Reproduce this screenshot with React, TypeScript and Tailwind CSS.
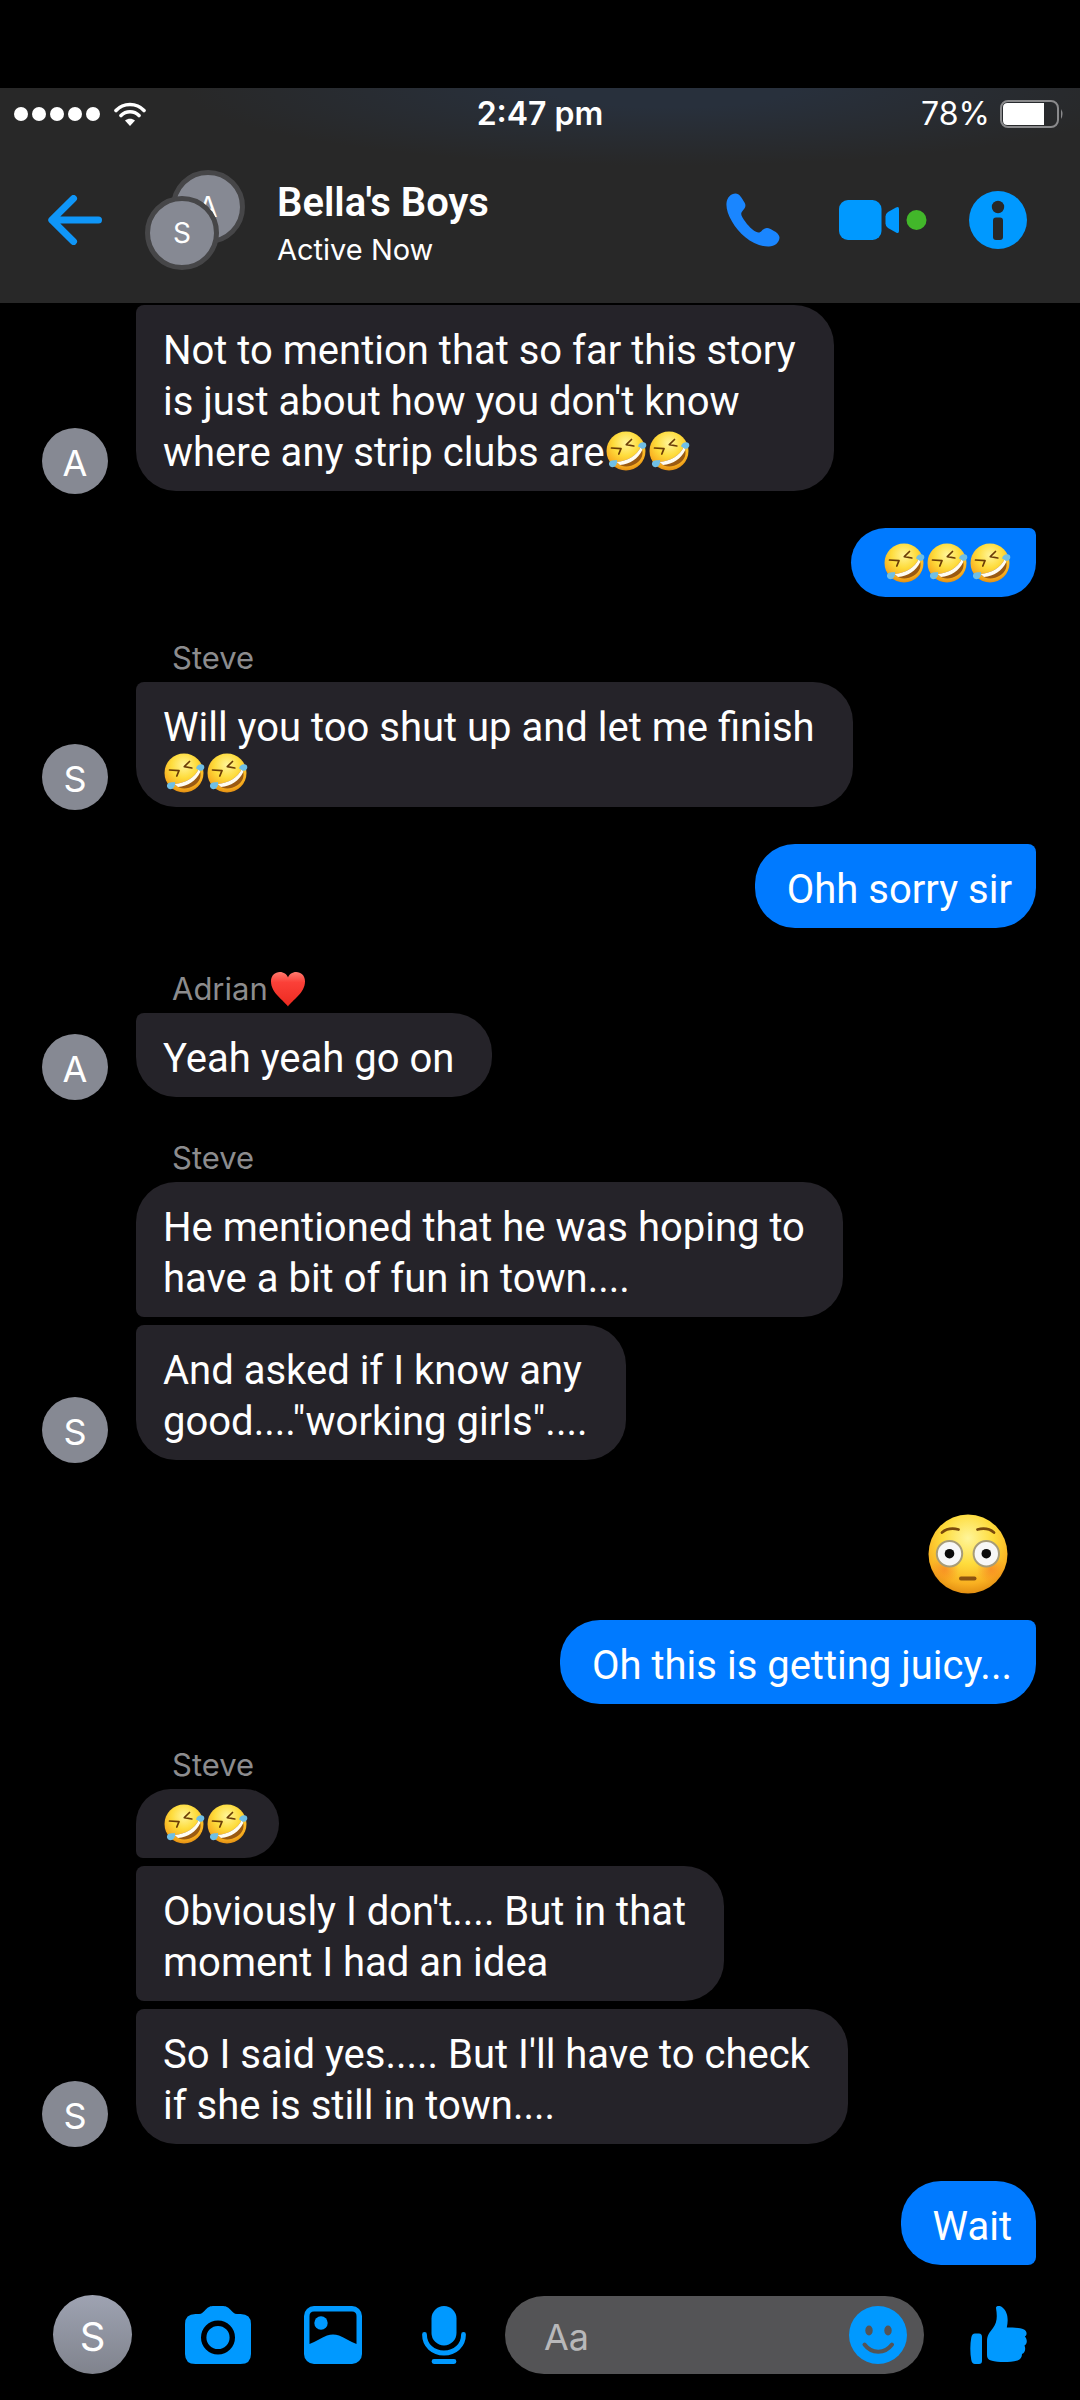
import {ReactNode} from 'react'
import clsx from 'clsx'

type Part = 'rofl' | string

interface Message {
  lines: Part[][]
  corner: string
}

interface Group {
  from: 'me' | 'Steve' | 'Adrian'
  hideName?: boolean
  flushed?: boolean
  messages: Message[]
}

const SQUARE_TL = 'rounded-tl-lg'
const SQUARE_BL = 'rounded-bl-lg'
const SQUARE_LEFT = 'rounded-l-lg'
const SQUARE_TR = 'rounded-tr-lg'
const SQUARE_BR = 'rounded-br-lg'

const conversation: Group[] = [
  {
    from: 'Adrian',
    hideName: true,
    messages: [
      {
        lines: [
          ['Not to mention that so far this story'],
          ["is just about how you don't know"],
          ['where any strip clubs are', 'rofl', 'rofl'],
        ],
        corner: SQUARE_TL,
      },
    ],
  },
  {
    from: 'me',
    messages: [{lines: [['rofl', 'rofl', 'rofl']], corner: SQUARE_TR}],
  },
  {
    from: 'Steve',
    messages: [
      {
        lines: [
          ['Will you too shut up and let me finish'],
          ['rofl', 'rofl'],
        ],
        corner: SQUARE_TL,
      },
    ],
  },
  {from: 'me', messages: [{lines: [['Ohh sorry sir']], corner: SQUARE_TR}]},
  {
    from: 'Adrian',
    messages: [{lines: [['Yeah yeah go on']], corner: SQUARE_TL}],
  },
  {
    from: 'Steve',
    messages: [
      {
        lines: [
          ['He mentioned that he was hoping to'],
          ['have a bit of fun in town....'],
        ],
        corner: SQUARE_BL,
      },
      {
        lines: [['And asked if I know any'], ['good...."working girls"....']],
        corner: SQUARE_TL,
      },
    ],
  },
  {
    from: 'me',
    flushed: true,
    messages: [
      {lines: [['Oh this is getting juicy...']], corner: SQUARE_TR},
    ],
  },
  {
    from: 'Steve',
    messages: [
      {lines: [['rofl', 'rofl']], corner: SQUARE_BL},
      {
        lines: [["Obviously I don't.... But in that"], ['moment I had an idea']],
        corner: SQUARE_LEFT,
      },
      {
        lines: [
          ["So I said yes..... But I'll have to check"],
          ['if she is still in town....'],
        ],
        corner: SQUARE_TL,
      },
    ],
  },
  {from: 'me', messages: [{lines: [['Wait']], corner: SQUARE_BR}]},
]

const EmojiDefs = () => (
  <svg className="absolute size-0" aria-hidden="true">
    <defs>
      <radialGradient id="face" cx="0.5" cy="0.3" r="0.72">
        <stop offset="0" stopColor="#fff59a" />
        <stop offset="0.45" stopColor="#fedc3c" />
        <stop offset="0.8" stopColor="#f9b021" />
        <stop offset="1" stopColor="#e08a10" />
      </radialGradient>
      <radialGradient id="cheek">
        <stop offset="0" stopColor="#f4511e" stopOpacity="0.4" />
        <stop offset="1" stopColor="#f4511e" stopOpacity="0" />
      </radialGradient>
      <linearGradient id="heart" x1="0" y1="0" x2="0" y2="1">
        <stop offset="0" stopColor="#ff7a6e" />
        <stop offset="0.3" stopColor="#fb4038" />
        <stop offset="1" stopColor="#ec2a20" />
      </linearGradient>
    </defs>
  </svg>
)

const Rofl = () => (
  <svg
    role="img"
    aria-label="🤣"
    viewBox="-1 0 43 40"
    className="inline-block h-10 w-[43px] shrink-0 align-[-5px]"
  >
    <circle cx="20" cy="20" r="19.5" fill="url(#face)" />
    <path
      d="M10.5 31C21 30 31 25 35 15.5C38.5 22 36 29 30 32.5C23 37 15 36.5 10.5 31Z"
      fill="#9a5a12"
    />
    <path
      d="M10.5 31C21 30 31 25 35 15.5L36.3 19C32 28 24 33 14 34Z"
      fill="#fffdf4"
    />
    <path
      d="M25.5 8.5L20.3 13.6L27.8 15M5.5 17L15 17.6L12.8 23"
      fill="none"
      stroke="#6b3c06"
      strokeWidth="1.7"
      strokeLinecap="round"
      strokeLinejoin="round"
    />
    <path
      d="M32 15.5C33 11.5 37 10.5 39.5 12C41.5 14.5 39.5 18 36.5 17.8C35 17.5 33.5 16 32 15.5Z"
      fill="#6fbfe6"
    />
    <path
      d="M11 29C11.5 33 9.5 36.5 6 36.2C2.5 35.5 2 31.5 4.5 30C6.5 28.8 9 29.6 11 29Z"
      fill="#6fbfe6"
    />
  </svg>
)

const Flushed = () => (
  <svg
    role="img"
    aria-label="😳"
    viewBox="0 0 80 80"
    className="mr-7 mb-[18px] size-20"
  >
    <circle cx="40" cy="40" r="39.5" fill="url(#face)" />
    <circle cx="17" cy="55" r="14" fill="url(#cheek)" />
    <circle cx="63" cy="55" r="14" fill="url(#cheek)" />
    <g fill="#f7f7f7" stroke="#a79c78" strokeWidth="2">
      <circle cx="21.5" cy="39.7" r="12.7" />
      <circle cx="58.3" cy="39.7" r="12.7" />
    </g>
    <circle cx="21.5" cy="39.7" r="4.8" fill="#0b0b0b" />
    <circle cx="58.3" cy="39.7" r="4.8" fill="#0b0b0b" />
    <path
      d="M14 18.5Q20.5 13 30.5 15.5M66 18.5Q59.5 13 49.5 15.5"
      fill="none"
      stroke="#7a4a0c"
      strokeWidth="2.8"
      strokeLinecap="round"
    />
    <rect x="31" y="62.5" width="17.5" height="4" rx="2" fill="#8a5310" />
  </svg>
)

const Heart = () => (
  <svg role="img" aria-label="❤️" viewBox="0 0 36 36" className="ml-[2px] size-9">
    <path
      d="M18 35.5C14 29.5 1 22 1 10.5C1 4.5 5 1 9.8 1C13.8 1 16.8 3.3 18 6.5C19.2 3.3 22.2 1 26.2 1C31 1 35 4.5 35 10.5C35 22 22 29.5 18 35.5Z"
      fill="url(#heart)"
    />
  </svg>
)

const Avatar = ({name}: {name: string}) => (
  <div className="-mb-[3px] flex size-[66px] shrink-0 items-center justify-center rounded-full bg-[#868993] pt-1 text-[36px] leading-none">
    {name[0]}
  </div>
)

const isEmojiLine = (line: Part[]) => line.every(part => part === 'rofl')

const Bubble = ({message, mine}: {message: Message; mine: boolean}) => {
  const emojiOnly = message.lines.every(isEmojiLine)

  return (
    <div
      className={clsx(
        "w-fit rounded-[40px] pb-[13px] font-[Roboto,'Liberation_Sans',sans-serif] text-[40px] leading-[51px] whitespace-nowrap",
        emojiOnly ? 'pt-[15px]' : 'pt-5',
        mine ? 'bg-[#007aff] pr-6 pl-8' : 'bg-[#252329] pl-[27px]',
        !mine && (emojiOnly ? 'pr-[30px]' : 'pr-[38px]'),
        message.corner,
      )}
    >
      {message.lines.map((line, i) => (
        <div key={i} className={clsx(isEmojiLine(line) && 'flex h-[41px]')}>
          {line.map((part, j) => (part === 'rofl' ? <Rofl key={j} /> : part))}
        </div>
      ))}
    </div>
  )
}

const MessageGroup = ({group}: {group: Group}) => {
  const bubbles = group.messages.map((message, i) => (
    <Bubble key={i} message={message} mine={group.from === 'me'} />
  ))

  if (group.from === 'me') {
    return (
      <div
        className={clsx(
          'flex flex-col items-end gap-2 pr-11',
          group.flushed ? 'pt-[54px]' : 'pt-[37px]',
        )}
      >
        {group.flushed && <Flushed />}
        {bubbles}
      </div>
    )
  }

  return (
    <div className={clsx(!group.hideName && 'pt-[37px]')}>
      {!group.hideName && (
        <div className="flex h-12 items-center pl-[172px] text-[31px] leading-10 text-[#8c8c8e]">
          <span>{group.from}</span>
          {group.from === 'Adrian' && <Heart />}
        </div>
      )}
      <div className="flex items-end gap-7 pl-[42px]">
        <Avatar name={group.from} />
        <div className="flex flex-col gap-2">{bubbles}</div>
      </div>
    </div>
  )
}

const StatusBar = () => (
  <div className="grid h-[52px] grid-cols-3 items-center px-[14px] text-[32px] leading-none">
    <div className="flex items-center">
      <div className="flex gap-1">
        {[0, 1, 2, 3, 4].map(dot => (
          <span key={dot} className="size-[14px] rounded-full bg-white" />
        ))}
      </div>
      <svg viewBox="0 0 32 24" className="ml-[14px] h-6 w-8" fill="none">
        <path
          d="M2 8.5C9.5 0.5 22.5 0.5 30 8.5M7 13.5C12 8.5 20 8.5 25 13.5"
          stroke="white"
          strokeWidth="3.6"
          strokeLinecap="round"
        />
        <path d="M11 18.5C14 16 18 16 21 18.5L16 24Z" fill="white" />
      </svg>
    </div>
    <div className="text-center font-semibold">2:47 pm</div>
    <div className="flex items-center justify-end gap-[10px]">
      <span>78%</span>
      <svg viewBox="0 0 66 30" className="h-[30px] w-[66px]">
        <rect
          x="1"
          y="2"
          width="57"
          height="26"
          rx="7"
          fill="none"
          stroke="#8a8a8c"
          strokeWidth="2"
        />
        <path d="M7.5 4H44V26H7.5Q3 26 3 21.5V8.5Q3 4 7.5 4Z" fill="white" />
        <path d="M61 10Q64 15 61 20Z" fill="#8a8a8c" />
      </svg>
    </div>
  </div>
)

const IconButton = ({
  label,
  children,
  className,
}: {
  label: string
  children: ReactNode
  className?: string
}) => (
  <button type="button" aria-label={label} className={clsx('shrink-0', className)}>
    {children}
  </button>
)

const ChatHeader = () => (
  <div className="flex h-[163px] items-center pr-[53px] pb-1 pl-12">
    <IconButton label="Back">
      <svg viewBox="0 0 54 50" className="h-[50px] w-[54px]" fill="none">
        <path
          d="M50.5 25H4M25.5 3.5L3.8 25L25.5 46.5"
          stroke="#0f96f8"
          strokeWidth="7"
          strokeLinecap="round"
          strokeLinejoin="round"
        />
      </svg>
    </IconButton>
    <div className="relative ml-[43px] size-[100px] shrink-0">
      <div className="absolute top-0 right-0 flex size-[74px] items-center justify-center rounded-full border-[5px] border-[#464648] bg-[#868993] text-[28px]">
        A
      </div>
      <div className="absolute bottom-0 left-0 flex size-[74px] items-center justify-center rounded-full border-[5px] border-[#464648] bg-[#868993] text-[28px]">
        S
      </div>
    </div>
    <div className="ml-8 grow pt-3">
      <h1 className="font-[Roboto,'Liberation_Sans',sans-serif] text-[40px] leading-[48px] font-semibold">
        Bella&apos;s Boys
      </h1>
      <p className="text-[29px] leading-[46px]">Active Now</p>
    </div>
    <IconButton label="Call">
      <svg viewBox="0 0 54 54" className="size-[54px]">
        <path
          d="M0.5 10C1 4.5 5 0.5 9.5 0.5C13.5 0.5 15.5 4.5 18.5 9.5C20.5 13 19 15.5 16.5 18C14.5 20 15 22 16.5 24.5C20 30.5 25 36 30 38.8C32.5 40 34 39.8 36 37.5C38.5 35 41 34 44.5 36C49.5 38.8 53 40.5 53.5 44.5C53.5 49.5 48.5 53.5 43 53.5C28 54 13 41 6 28.5C2 21.5 0 15.5 0.5 10Z"
          fill="#1a86ff"
        />
      </svg>
    </IconButton>
    <IconButton label="Video call" className="ml-[59px]">
      <svg viewBox="0 0 88 40" className="h-10 w-[88px]">
        <rect width="42.5" height="40" rx="9" fill="#0099ff" />
        <path
          d="M46.5 16.5Q46.5 13.5 49 12L57 7.5Q60 6 60 9V31Q60 34 57 32.5L49 28Q46.5 26.5 46.5 23.5Z"
          fill="#0099ff"
        />
        <circle cx="77.5" cy="20" r="10" fill="#42b72a" />
      </svg>
    </IconButton>
    <IconButton label="Conversation info" className="ml-[42px]">
      <svg viewBox="0 0 58 58" className="size-[58px]">
        <circle cx="29" cy="29" r="29" fill="#0099ff" />
        <circle cx="29" cy="16" r="6.2" fill="#282828" />
        <rect x="24" y="26.5" width="10" height="22.5" rx="3" fill="#282828" />
      </svg>
    </IconButton>
  </div>
)

const Composer = () => (
  <footer className="flex items-center pt-[30px] pr-[53px] pb-[26px] pl-[53px]">
    <IconButton
      label="Your profile"
      className="flex size-[79px] items-center justify-center rounded-full bg-linear-to-b from-[#9ea3b2] to-[#80838d] pt-1 text-[40px] leading-none"
    >
      S
    </IconButton>
    <IconButton label="Camera" className="ml-[53px]">
      <svg viewBox="0 0 66 58" className="h-[58px] w-[66px]">
        <path
          d="M10.5 8H14C17 8 18 6.5 20.5 3.8C23.5 0.5 25.5 0 29 0H37C40.5 0 42.5 0.5 45.5 3.8C48 6.5 49 8 52 8H55.5Q66 8 66 18V48Q66 58 55.5 58H10.5Q0 58 0 48V18Q0 8 10.5 8Z"
          fill="#0099ff"
        />
        <circle cx="33" cy="31.5" r="14.3" fill="none" stroke="black" strokeWidth="5.4" />
      </svg>
    </IconButton>
    <IconButton label="Gallery" className="ml-[53px]">
      <svg viewBox="0 0 58 58" className="size-[58px]">
        <rect width="58" height="58" rx="10" fill="#0099ff" />
        <path
          d="M5.5 38V10Q5.5 5.5 10 5.5H48Q52.5 5.5 52.5 10V38C46 35.5 41 32 35 29.5C31 28 27 28 23 29.5C17 32 12 35.5 5.5 38Z"
          fill="black"
        />
        <circle cx="17" cy="17" r="6.7" fill="#0099ff" />
      </svg>
    </IconButton>
    <IconButton label="Voice message" className="ml-[60px]">
      <svg viewBox="0 0 44 58" className="h-[58px] w-11">
        <rect x="9.5" width="25" height="39.5" rx="12.5" fill="#0099ff" />
        <path
          d="M2.5 28.5C2.5 39.5 11 47 22 47S41.5 39.5 41.5 28.5M12 55.5H32"
          fill="none"
          stroke="#0099ff"
          strokeWidth="4.8"
          strokeLinecap="round"
        />
      </svg>
    </IconButton>
    <div className="ml-[39px] flex h-[78px] min-w-0 grow items-center rounded-full bg-[#545456] pr-[17px] pl-[39px]">
      <input
        type="text"
        aria-label="Message"
        placeholder="Aa"
        className="h-full min-w-0 grow bg-transparent pt-1 text-[36px] outline-none placeholder:text-[#b8b8ba]"
      />
      <IconButton label="Emoji">
        <svg viewBox="0 0 58 58" className="size-[58px]">
          <circle cx="29" cy="29" r="29" fill="#0099ff" />
          <ellipse cx="20" cy="24.5" rx="3.7" ry="5" fill="#545456" />
          <ellipse cx="39" cy="24.5" rx="3.7" ry="5" fill="#545456" />
          <path
            d="M15.5 38.5C22.5 48 36 48 43 38.5"
            fill="none"
            stroke="#545456"
            strokeWidth="4"
            strokeLinecap="round"
          />
        </svg>
      </IconButton>
    </div>
    <IconButton label="Like" className="ml-[46px]">
      <svg viewBox="0 0 57 58" className="h-[58px] w-[57px]" fill="#0099ff">
        <path d="M5 27.5H9Q12 27.5 12 31V55Q12 58 9 58H5Q2 58 1.3 54C0 47 0 38 1.3 31.5Q2 27.5 5 27.5Z" />
        <path d="M26 2C26 -0.5 30 -0.5 32.5 1.5C38 6 38.5 14 36.8 21.5C43 21.5 49 21.5 54 23.5C57 25 57.5 29 54.8 30.5C57.5 33 57.5 38 54.5 39.5C56 43 55 47 52 48C52 51 50.5 53.5 47.5 54.5C39 56.5 29 56.5 21 54.5C18 53.5 17 52 17 49V35C17 29 20 26 23 22C27 16.5 27.5 11 26 2Z" />
      </svg>
    </IconButton>
  </footer>
)

export default function App() {
  return (
    <div className="flex min-h-screen flex-col bg-black pt-[88px] font-[Inter,'Liberation_Sans',sans-serif] text-white">
      <EmojiDefs />
      <header className="bg-[#282828] bg-[radial-gradient(ellipse_45%_36%_at_62%_0%,#28303c_25%,transparent)]">
        <StatusBar />
        <ChatHeader />
      </header>
      <main className="grow pt-[2px]">
        {conversation.map((group, i) => (
          <MessageGroup key={i} group={group} />
        ))}
      </main>
      <Composer />
    </div>
  )
}
